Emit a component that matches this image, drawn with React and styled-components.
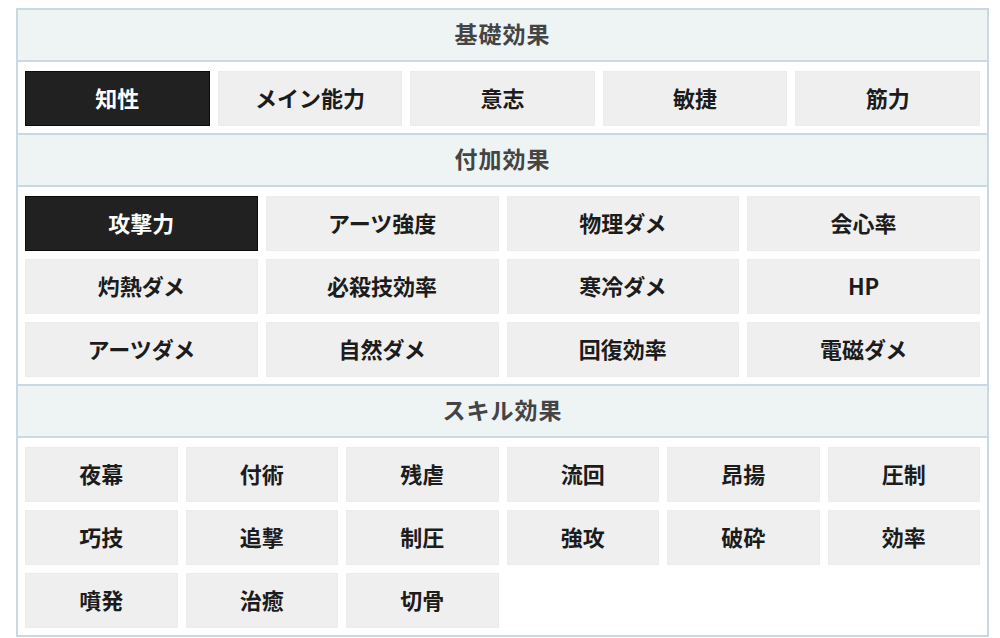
import React, { useState } from 'react';
import styled, { createGlobalStyle } from 'styled-components';

const GlobalStyle = createGlobalStyle`
  html, body {
    margin: 0;
    padding: 0;
    background: #ffffff;
  }
  body {
    font-family: "Noto Sans CJK JP", "Noto Sans", sans-serif;
  }
  * {
    box-sizing: border-box;
  }
`;

const Page = styled.div`
  padding: 8px 11px 0 16px;
`;

const Panel = styled.div`
  width: 973px;
  border: 2px solid #cad8e2;
  background: #ffffff;
`;

// header box is 50px of content plus its borders
const SectionHeader = styled.div`
  box-sizing: content-box;
  height: 47px;
  padding-bottom: 3px;
  display: flex;
  align-items: center;
  justify-content: center;
  background: #eef3f4;
  border-top: ${(p) => (p.first ? 'none' : '2px solid #cad8e2')};
  border-bottom: 2px solid #cad8e2;
  font-size: 23px;
  font-weight: 700;
  color: #444444;
  letter-spacing: 1px;
  line-height: 1;
`;

const ButtonGrid = styled.div`
  display: grid;
  grid-template-columns: repeat(${(p) => p.cols}, 1fr);
  grid-auto-rows: 55px;
  gap: 8px;
  padding: 9px 7px 7px;
`;

const OptionButton = styled.button`
  display: flex;
  align-items: center;
  justify-content: center;
  margin: 0;
  padding: 0 0 3px;
  font-family: inherit;
  font-size: 22px;
  font-weight: 700;
  line-height: 1;
  cursor: pointer;
  background: ${(p) => (p.active ? '#212121' : '#efefef')};
  color: ${(p) => (p.active ? '#ffffff' : '#1c1c1c')};
  border: 1px solid ${(p) => (p.active ? '#0c0c0c' : '#ececec')};
`;

const sections = [
  {
    title: '基礎効果',
    cols: 5,
    items: ['知性', 'メイン能力', '意志', '敏捷', '筋力'],
  },
  {
    title: '付加効果',
    cols: 4,
    items: [
      '攻撃力', 'アーツ強度', '物理ダメ', '会心率',
      '灼熱ダメ', '必殺技効率', '寒冷ダメ', 'HP',
      'アーツダメ', '自然ダメ', '回復効率', '電磁ダメ',
    ],
  },
  {
    title: 'スキル効果',
    cols: 6,
    items: [
      '夜幕', '付術', '残虐', '流回', '昂揚', '圧制',
      '巧技', '追撃', '制圧', '強攻', '破砕', '効率',
      '噴発', '治癒', '切骨',
    ],
  },
];

export default function App() {
  const [selected, setSelected] = useState({ 0: '知性', 1: '攻撃力', 2: null });

  return (
    <Page>
      <GlobalStyle />
      <Panel>
        {sections.map((section, i) => (
          <React.Fragment key={section.title}>
            <SectionHeader first={i === 0}>{section.title}</SectionHeader>
            <ButtonGrid cols={section.cols}>
              {section.items.map((item) => (
                <OptionButton
                  key={item}
                  active={selected[i] === item}
                  onClick={() => setSelected({ ...selected, [i]: item })}
                >
                  {item}
                </OptionButton>
              ))}
            </ButtonGrid>
          </React.Fragment>
        ))}
      </Panel>
    </Page>
  );
}
